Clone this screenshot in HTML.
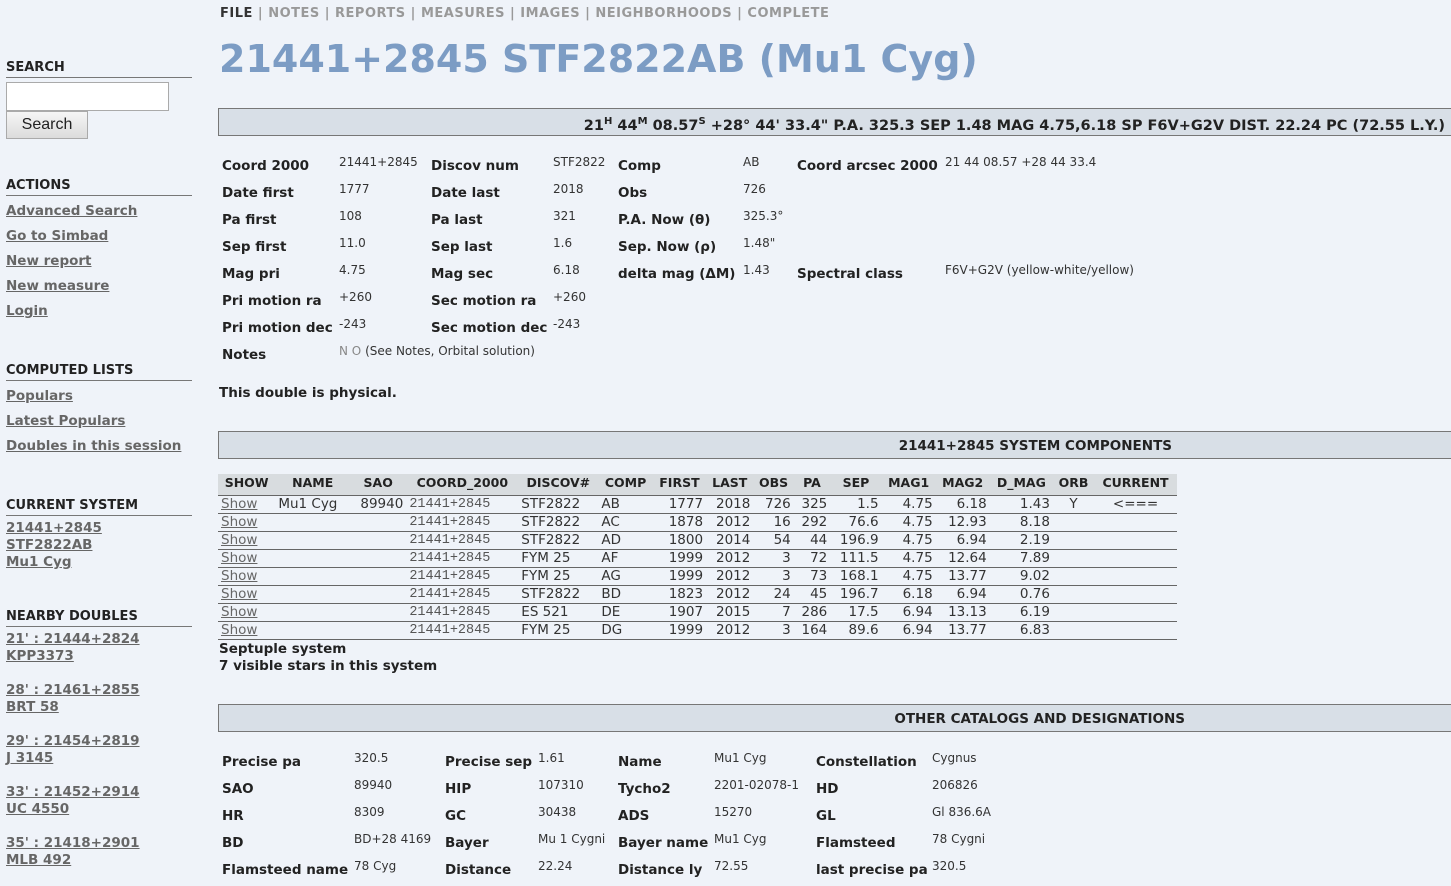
<!DOCTYPE html>
<html><head><meta charset="utf-8"><style>
body{margin:0;background:#eff3f9;font-family:"DejaVu Sans","Liberation Sans",sans-serif;color:#222;width:1451px;height:886px;overflow:hidden;position:relative}
.a{position:absolute;white-space:nowrap}
.sh{font-weight:bold;font-size:13px;color:#222;left:6px;width:186px;border-bottom:1px solid #777;padding-bottom:2px}
.lk{left:6px;font-weight:bold;font-size:13.5px;color:#666;text-decoration:underline}
.l{position:absolute;white-space:nowrap;font-weight:bold;font-size:13.5px;color:#222}
.v{position:absolute;white-space:nowrap;font-size:12px;color:#333}
.bar{position:absolute;left:218px;width:1240px;background:#d8dfe7;border:1px solid #777;box-sizing:border-box;font-weight:bold;font-size:13.5px;text-align:right;padding-right:12px}
table{border-collapse:collapse;font-size:13.5px}
td,th{padding:0 3px;height:17px;line-height:17px;white-space:nowrap}
th{background:#d8dcdf;font-size:12.5px;text-align:center;height:21px;line-height:18px;vertical-align:top;border-bottom:1px solid #666}
td{border-bottom:1px solid #666;text-align:right;color:#333}
td.s{text-align:left;color:#666;text-decoration:underline}
td.m{font-family:"Liberation Mono",monospace;font-size:13.5px;color:#555;text-align:left}
td.t{text-align:left}
</style></head><body>
<div class="a" style="left:220px;top:6px;font-size:13px;font-weight:bold;color:#999;letter-spacing:0.5px"><span style="color:#333">FILE</span> | NOTES | REPORTS | MEASURES | IMAGES | NEIGHBORHOODS | COMPLETE</div>
<div class="a" style="left:219px;top:37px;font-size:38px;font-weight:bold;color:#7c9cc4">21441+2845 STF2822AB (Mu1 Cyg)</div>

<div class="a sh" style="top:60px">SEARCH</div>
<div class="a" style="left:6px;top:82px;width:161px;height:27px;background:#fff;border:1px solid #aaa"></div>
<div class="a" style="left:6px;top:111px;width:80px;height:26px;background:linear-gradient(#f6f6f6,#dcdcdc);border:1px solid #aaa;font-family:'Liberation Sans',sans-serif;font-size:16px;text-align:center;line-height:26px">Search</div>
<div class="a sh" style="top:178px">ACTIONS</div>
<div class="a lk" style="top:203px">Advanced Search</div>
<div class="a lk" style="top:228px">Go to Simbad</div>
<div class="a lk" style="top:253px">New report</div>
<div class="a lk" style="top:278px">New measure</div>
<div class="a lk" style="top:303px">Login</div>
<div class="a sh" style="top:363px">COMPUTED LISTS</div>
<div class="a lk" style="top:388px">Populars</div>
<div class="a lk" style="top:413px">Latest Populars</div>
<div class="a lk" style="top:438px">Doubles in this session</div>
<div class="a sh" style="top:498px">CURRENT SYSTEM</div>
<div class="a lk" style="top:520px;line-height:17px">21441+2845<br>STF2822AB<br>Mu1 Cyg</div>
<div class="a sh" style="top:609px">NEARBY DOUBLES</div>
<div class="a lk" style="top:631px;line-height:17px">21' : 21444+2824<br>KPP3373</div>
<div class="a lk" style="top:682px;line-height:17px">28' : 21461+2855<br>BRT 58</div>
<div class="a lk" style="top:733px;line-height:17px">29' : 21454+2819<br>J 3145</div>
<div class="a lk" style="top:784px;line-height:17px">33' : 21452+2914<br>UC 4550</div>
<div class="a lk" style="top:835px;line-height:17px">35' : 21418+2901<br>MLB 492</div>

<div class="bar" style="top:108px;height:28px;padding-top:7px;padding-right:12px;font-size:14.5px">21<sup style="font-size:10px">H</sup> 44<sup style="font-size:10px">M</sup> 08.57<sup style="font-size:10px">S</sup> +28° 44' 33.4" P.A. 325.3 SEP 1.48 MAG 4.75,6.18 SP F6V+G2V DIST. 22.24 PC (72.55 L.Y.)</div>

<div class="l" style="left:222px;top:158px">Coord 2000</div><div class="v" style="left:339px;top:155px">21441+2845</div>
<div class="l" style="left:431px;top:158px">Discov num</div><div class="v" style="left:553px;top:155px">STF2822</div>
<div class="l" style="left:618px;top:158px">Comp</div><div class="v" style="left:743px;top:155px">AB</div>
<div class="l" style="left:797px;top:158px">Coord arcsec 2000</div><div class="v" style="left:945px;top:155px">21 44 08.57 +28 44 33.4</div>
<div class="l" style="left:222px;top:185px">Date first</div><div class="v" style="left:339px;top:182px">1777</div>
<div class="l" style="left:431px;top:185px">Date last</div><div class="v" style="left:553px;top:182px">2018</div>
<div class="l" style="left:618px;top:185px">Obs</div><div class="v" style="left:743px;top:182px">726</div>
<div class="l" style="left:222px;top:212px">Pa first</div><div class="v" style="left:339px;top:209px">108</div>
<div class="l" style="left:431px;top:212px">Pa last</div><div class="v" style="left:553px;top:209px">321</div>
<div class="l" style="left:618px;top:212px">P.A. Now (θ)</div><div class="v" style="left:743px;top:209px">325.3°</div>
<div class="l" style="left:222px;top:239px">Sep first</div><div class="v" style="left:339px;top:236px">11.0</div>
<div class="l" style="left:431px;top:239px">Sep last</div><div class="v" style="left:553px;top:236px">1.6</div>
<div class="l" style="left:618px;top:239px">Sep. Now (ρ)</div><div class="v" style="left:743px;top:236px">1.48"</div>
<div class="l" style="left:222px;top:266px">Mag pri</div><div class="v" style="left:339px;top:263px">4.75</div>
<div class="l" style="left:431px;top:266px">Mag sec</div><div class="v" style="left:553px;top:263px">6.18</div>
<div class="l" style="left:618px;top:266px">delta mag (ΔM)</div><div class="v" style="left:743px;top:263px">1.43</div>
<div class="l" style="left:797px;top:266px">Spectral class</div><div class="v" style="left:945px;top:263px">F6V+G2V (yellow-white/yellow)</div>
<div class="l" style="left:222px;top:293px">Pri motion ra</div><div class="v" style="left:339px;top:290px">+260</div>
<div class="l" style="left:431px;top:293px">Sec motion ra</div><div class="v" style="left:553px;top:290px">+260</div>
<div class="l" style="left:222px;top:320px">Pri motion dec</div><div class="v" style="left:339px;top:317px">-243</div>
<div class="l" style="left:431px;top:320px">Sec motion dec</div><div class="v" style="left:553px;top:317px">-243</div>
<div class="l" style="left:222px;top:347px">Notes</div><div class="v" style="left:339px;top:344px"><span style="color:#888">N O</span> (See Notes, Orbital solution)</div>
<div class="l" style="left:219px;top:385px">This double is physical.</div>

<div class="bar" style="top:431px;height:28px;padding-top:6px;padding-right:285px">21441+2845 SYSTEM COMPONENTS</div>

<table class="a" style="left:218px;top:474px;width:959px">
<tr><th>SHOW</th><th>NAME</th><th>SAO</th><th>COORD_2000</th><th>DISCOV#</th><th>COMP</th><th>FIRST</th><th>LAST</th><th>OBS</th><th>PA</th><th>SEP</th><th>MAG1</th><th>MAG2</th><th>D_MAG</th><th>ORB</th><th>CURRENT</th></tr>
<tr><td class="s">Show</td><td class="t">Mu1 Cyg</td><td>89940</td><td class="m">21441+2845</td><td class="t">STF2822</td><td class="t">AB</td><td>1777</td><td>2018</td><td>726</td><td>325</td><td>1.5</td><td>4.75</td><td>6.18</td><td>1.43</td><td style="text-align:center">Y</td><td style="text-align:center">&lt;===</td></tr>
<tr><td class="s">Show</td><td></td><td></td><td class="m">21441+2845</td><td class="t">STF2822</td><td class="t">AC</td><td>1878</td><td>2012</td><td>16</td><td>292</td><td>76.6</td><td>4.75</td><td>12.93</td><td>8.18</td><td></td><td></td></tr>
<tr><td class="s">Show</td><td></td><td></td><td class="m">21441+2845</td><td class="t">STF2822</td><td class="t">AD</td><td>1800</td><td>2014</td><td>54</td><td>44</td><td>196.9</td><td>4.75</td><td>6.94</td><td>2.19</td><td></td><td></td></tr>
<tr><td class="s">Show</td><td></td><td></td><td class="m">21441+2845</td><td class="t">FYM 25</td><td class="t">AF</td><td>1999</td><td>2012</td><td>3</td><td>72</td><td>111.5</td><td>4.75</td><td>12.64</td><td>7.89</td><td></td><td></td></tr>
<tr><td class="s">Show</td><td></td><td></td><td class="m">21441+2845</td><td class="t">FYM 25</td><td class="t">AG</td><td>1999</td><td>2012</td><td>3</td><td>73</td><td>168.1</td><td>4.75</td><td>13.77</td><td>9.02</td><td></td><td></td></tr>
<tr><td class="s">Show</td><td></td><td></td><td class="m">21441+2845</td><td class="t">STF2822</td><td class="t">BD</td><td>1823</td><td>2012</td><td>24</td><td>45</td><td>196.7</td><td>6.18</td><td>6.94</td><td>0.76</td><td></td><td></td></tr>
<tr><td class="s">Show</td><td></td><td></td><td class="m">21441+2845</td><td class="t">ES 521</td><td class="t">DE</td><td>1907</td><td>2015</td><td>7</td><td>286</td><td>17.5</td><td>6.94</td><td>13.13</td><td>6.19</td><td></td><td></td></tr>
<tr><td class="s">Show</td><td></td><td></td><td class="m">21441+2845</td><td class="t">FYM 25</td><td class="t">DG</td><td>1999</td><td>2012</td><td>3</td><td>164</td><td>89.6</td><td>6.94</td><td>13.77</td><td>6.83</td><td></td><td></td></tr>
</table>
<div class="l" style="left:219px;top:641px;line-height:17px">Septuple system<br>7 visible stars in this system</div>

<div class="bar" style="top:704px;height:28px;padding-top:6px;padding-right:272px">OTHER CATALOGS AND DESIGNATIONS</div>

<div class="l" style="left:222px;top:754px">Precise pa</div><div class="v" style="left:354px;top:751px">320.5</div>
<div class="l" style="left:445px;top:754px">Precise sep</div><div class="v" style="left:538px;top:751px">1.61</div>
<div class="l" style="left:618px;top:754px">Name</div><div class="v" style="left:714px;top:751px">Mu1 Cyg</div>
<div class="l" style="left:816px;top:754px">Constellation</div><div class="v" style="left:932px;top:751px">Cygnus</div>
<div class="l" style="left:222px;top:781px">SAO</div><div class="v" style="left:354px;top:778px">89940</div>
<div class="l" style="left:445px;top:781px">HIP</div><div class="v" style="left:538px;top:778px">107310</div>
<div class="l" style="left:618px;top:781px">Tycho2</div><div class="v" style="left:714px;top:778px">2201-02078-1</div>
<div class="l" style="left:816px;top:781px">HD</div><div class="v" style="left:932px;top:778px">206826</div>
<div class="l" style="left:222px;top:808px">HR</div><div class="v" style="left:354px;top:805px">8309</div>
<div class="l" style="left:445px;top:808px">GC</div><div class="v" style="left:538px;top:805px">30438</div>
<div class="l" style="left:618px;top:808px">ADS</div><div class="v" style="left:714px;top:805px">15270</div>
<div class="l" style="left:816px;top:808px">GL</div><div class="v" style="left:932px;top:805px">Gl 836.6A</div>
<div class="l" style="left:222px;top:835px">BD</div><div class="v" style="left:354px;top:832px">BD+28 4169</div>
<div class="l" style="left:445px;top:835px">Bayer</div><div class="v" style="left:538px;top:832px">Mu 1 Cygni</div>
<div class="l" style="left:618px;top:835px">Bayer name</div><div class="v" style="left:714px;top:832px">Mu1 Cyg</div>
<div class="l" style="left:816px;top:835px">Flamsteed</div><div class="v" style="left:932px;top:832px">78 Cygni</div>
<div class="l" style="left:222px;top:862px">Flamsteed name</div><div class="v" style="left:354px;top:859px">78 Cyg</div>
<div class="l" style="left:445px;top:862px">Distance</div><div class="v" style="left:538px;top:859px">22.24</div>
<div class="l" style="left:618px;top:862px">Distance ly</div><div class="v" style="left:714px;top:859px">72.55</div>
<div class="l" style="left:816px;top:862px">last precise pa</div><div class="v" style="left:932px;top:859px">320.5</div>
</body></html>
